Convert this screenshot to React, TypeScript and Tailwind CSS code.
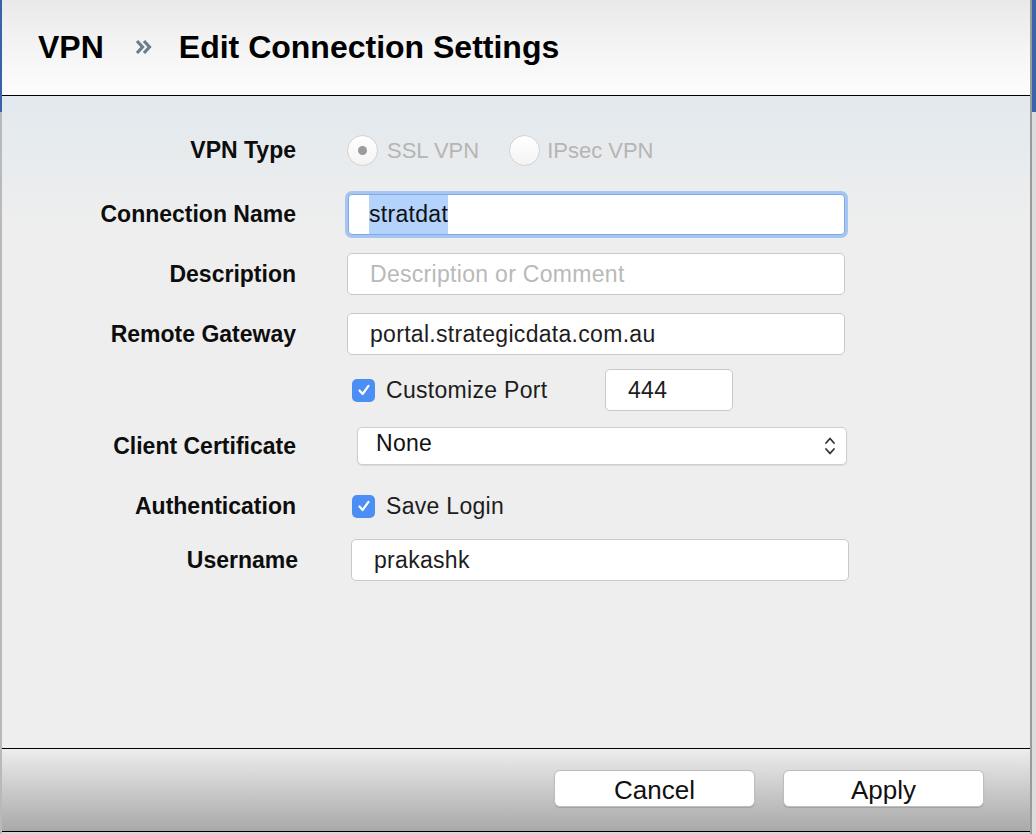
import React from 'react';

const sans = "font-['Liberation_Sans',Arial,sans-serif]";

const Check: React.FC = () => (
  <span className="flex h-[23px] w-[23px] shrink-0 items-center justify-center rounded-[5px] bg-[#4b8ff4]">
    <svg width="14" height="14" viewBox="0 0 14 14" fill="none">
      <path d="M2.5 7.5 L5.6 11 L11.5 2.8" stroke="#fff" strokeWidth="2.2" strokeLinecap="round" strokeLinejoin="round" />
    </svg>
  </span>
);

const Radio: React.FC<{ on?: boolean }> = ({ on }) => (
  <span className="flex h-[31px] w-[31px] shrink-0 items-center justify-center rounded-full border border-[#d3d3d3] bg-gradient-to-b from-white to-[#f4f4f4]">
    {on && <span className="h-[9px] w-[9px] rounded-full bg-[#9b9b9b]" />}
  </span>
);

const Label: React.FC<{ children: React.ReactNode; w?: string }> = ({ children, w = 'w-[294px]' }) => (
  <div className={`${w} shrink-0 text-right text-[23px] font-bold text-[#0d0d0d]`}>{children}</div>
);

const Field: React.FC<{ value?: string; placeholder?: string; className?: string }> = ({ value, placeholder, className }) => (
  <div className={`flex h-[42px] items-center rounded-[5px] border border-[#c9c9c9] bg-white pl-[22px] text-[23px] tracking-[0.3px] ${className ?? ''}`}>
    {value ? <span className="text-[#1d1d1d]">{value}</span> : <span className="text-[#b9b9b9]">{placeholder}</span>}
  </div>
);

export default function App() {
  return (
    <div className={`flex h-[834px] w-[1036px] overflow-hidden bg-[#e9e9e9] ${sans}`}>
      {/* left edge of window behind */}
      <div className="flex w-[2px] shrink-0 flex-col">
        <div className="h-[112px] bg-[#3a62a6]" />
        <div className="flex-1 bg-[#b9b9b9]" />
      </div>

      <div className="flex w-[1028px] shrink-0 flex-col">
        <div className="flex h-[832px] flex-col">
          {/* header */}
          <header className="flex h-[96px] shrink-0 items-center border-b border-black bg-gradient-to-b from-[#e9e9e9] via-[#f4f4f4] to-[#fdfdfd] pb-[2px] pl-[36px]">
            <h1 className="text-[32px] font-bold text-black">VPN</h1>
            <svg className="ml-[31px] mr-[27px]" width="17" height="16" viewBox="0 0 17 16" fill="none">
              <path d="M2 2 L7.5 8 L2 14" stroke="#6e7b8f" strokeWidth="3.2" />
              <path d="M9 2 L14.5 8 L9 14" stroke="#6e7b8f" strokeWidth="3.2" />
            </svg>
            <h1 className="text-[32px] font-bold text-black">Edit Connection Settings</h1>
          </header>

          {/* form body */}
          <main className="flex flex-1 flex-col bg-gradient-to-b from-[#e2e9ee] via-[#eeeeee] via-[20%] to-[#eeeeee]">
            <div className="mt-[34px] flex h-[40px] items-center">
              <Label>VPN Type</Label>
              <div className="ml-[51px] flex items-center text-[22px] text-[#b5b5b5]">
                <Radio on />
                <span className="ml-[9px]">SSL VPN</span>
                <span className="ml-[30px]"><Radio /></span>
                <span className="ml-[7px]">IPsec VPN</span>
              </div>
            </div>

            <div className="mt-[20px] flex h-[49px] items-center">
              <Label>Connection Name</Label>
              <div className="ml-[49px] w-[503px] rounded-[7px] bg-[#a6c5f1] p-[3px]">
                <div className="flex h-[41px] items-center rounded-[4px] border border-[#80aae6] bg-white pl-[20px] text-[23px] tracking-[0.3px]">
                  <span className="bg-[#b3d3fc] py-[2px] text-[#111]">stratdat</span>
                </div>
              </div>
            </div>

            <div className="mt-[14px] flex h-[42px] items-center">
              <Label>Description</Label>
              <Field className="ml-[51px] w-[498px]" placeholder="Description or Comment" />
            </div>

            <div className="mt-[18px] flex h-[42px] items-center">
              <Label>Remote Gateway</Label>
              <Field className="ml-[51px] w-[498px]" value="portal.strategicdata.com.au" />
            </div>

            <div className="mt-[14px] flex h-[42px] items-center">
              <div className="w-[294px] shrink-0" />
              <div className="ml-[56px] flex items-center">
                <Check />
                <span className="ml-[11px] w-[219px] text-[23px] tracking-[0.3px] text-[#1d1d1d]">Customize Port</span>
                <Field className="w-[128px]" value="444" />
              </div>
            </div>

            <div className="mt-[16px] flex h-[38px] items-center">
              <Label>Client Certificate</Label>
              <div className="ml-[61px] flex h-[38px] w-[490px] items-center justify-between rounded-[5px] border border-[#cdcdcd] bg-white pl-[18px] pr-[10px] shadow-[0_1px_1px_rgba(0,0,0,0.08)]">
                <span className="-mt-[6px] text-[23px] tracking-[0.3px] text-[#111]">None</span>
                <svg width="12" height="22" viewBox="0 0 12 22" fill="none">
                  <path d="M2 8 L6 3.5 L10 8" stroke="#333" strokeWidth="1.8" strokeLinecap="round" strokeLinejoin="round" />
                  <path d="M2 14 L6 18.5 L10 14" stroke="#333" strokeWidth="1.8" strokeLinecap="round" strokeLinejoin="round" />
                </svg>
              </div>
            </div>

            <div className="mt-[29px] flex h-[24px] items-center">
              <Label>Authentication</Label>
              <div className="ml-[56px] flex items-center">
                <Check />
                <span className="ml-[11px] text-[23px] tracking-[0.3px] text-[#1d1d1d]">Save Login</span>
              </div>
            </div>

            <div className="mt-[21px] flex h-[42px] items-center">
              <Label w="w-[296px]">Username</Label>
              <Field className="ml-[53px] w-[498px]" value="prakashk" />
            </div>
          </main>

          {/* footer */}
          <footer className="flex h-[84px] shrink-0 items-center justify-end gap-[28px] border-y border-black bg-gradient-to-b from-[#ededed] to-[#a9a9a9] pb-[4px] pr-[46px]">
            <button className="h-[37px] w-[201px] rounded-[6px] border border-[#bdbdbd] bg-white text-[26px] text-[#111] shadow-[0_1px_1px_rgba(0,0,0,0.15)]">
              Cancel
            </button>
            <button className="h-[37px] w-[201px] rounded-[6px] border border-[#bdbdbd] bg-white text-[26px] text-[#111] shadow-[0_1px_1px_rgba(0,0,0,0.15)]">
              Apply
            </button>
          </footer>
        </div>
        <div className="flex-1 bg-[#d8d8d8]" />
      </div>

      {/* right edge of window behind */}
      <div className="flex w-[6px] shrink-0 flex-col border-l-2 border-[#9a9a9a]">
        <div className="h-[112px] bg-[#3a64a8]" />
        <div className="flex-1 bg-[#dcdcdc]" />
      </div>
    </div>
  );
}
